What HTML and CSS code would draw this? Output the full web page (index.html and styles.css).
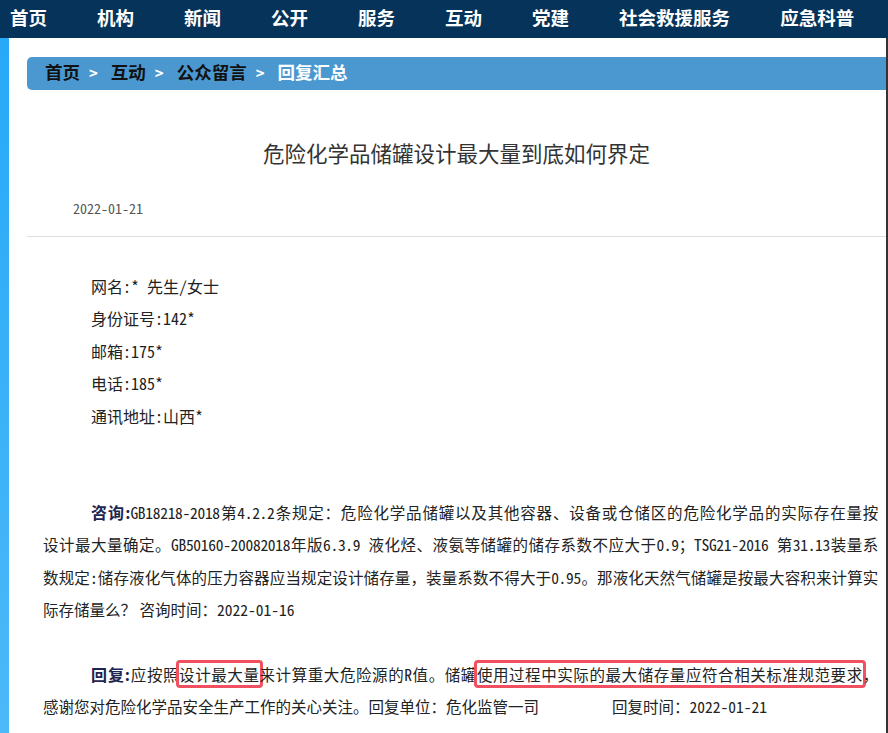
FILE: index.html
```html
<!DOCTYPE html>
<html lang="zh-CN">
<head>
    <meta charset="UTF-8" />
    <title>公众留言 - 回复汇总</title>
    <link rel="stylesheet" href="styles.css">
</head>
<body>

    <div class="topnav">
        <a href="#">首页</a>
        <a href="#">机构</a>
        <a href="#">新闻</a>
        <a href="#">公开</a>
        <a href="#">服务</a>
        <a href="#">互动</a>
        <a href="#">党建</a>
        <a href="#">社会救援服务</a>
        <a href="#">应急科普</a>
    </div>

    <div class="page">
        <div class="side"></div>

        <div class="main">
            <div class="crumb">
                <a href="#">首页</a><span class="sep">&gt;</span>
                <a href="#">互动</a><span class="sep">&gt;</span>
                <a href="#">公众留言</a><span class="sep">&gt;</span>
                <span class="current">回复汇总</span>
            </div>

            <h1 class="title">危险化学品储罐设计最大量到底如何界定</h1>
            <div class="date">2022-01-21</div>

            <div class="info">
                <p>网名:* 先生/女士</p>
                <p>身份证号:142*</p>
                <p>邮箱:175*</p>
                <p>电话:185*</p>
                <p>通讯地址:山西*</p>
            </div>

            <!-- latin runs get half-width glyphs, like the old 宋体 page -->
            <p class="ask"><b>咨询:</b><span class="en">GB18218-2018</span>第<span class="en">4.2.2</span>条规定：危险化学品储罐以及其他容器、设备或仓储区的危险化学品的实际存在量按<br>设计最大量确定。<span class="en">GB50160-20082018</span>年版<span class="en">6.3.9 </span>液化烃、液氨等储罐的储存系数不应大于<span class="en">0.9</span>；<span class="en">TSG21-2016 </span>第<span class="en">31.13</span>装量系<br>数规定<span class="en">:</span>储存液化气体的压力容器应当规定设计储存量，装量系数不得大于<span class="en">0.95</span>。那液化天然气储罐是按最大容积来计算实<span class="tail">际存储量么？ 咨询时间：<span class="en">2022-01-16</span></span></p>

            <p class="reply"><b>回复:</b>应按照<span class="mark">设计最大量</span>来计算重大危险源的<span class="en">R</span>值。储罐<span class="mark">使用过程中实际的最大储存量应符合相关标准规范要求</span>，<span class="tail">感谢您对危险化学品安全生产工作的关心关注。回复单位：危化监管一司<span class="time">回复时间：<span class="en">2022-01-21</span></span></span></p>
        </div>
    </div>

</body>
</html>
```

FILE: styles.css
```css
body {
    margin: 0;
    background: #fff;
    font-family: "Noto Sans CJK SC", sans-serif;
    color: #222;
}

.topnav {
    height: 38px;
    box-sizing: border-box;
    padding: 0 0 5px 10px;
    background-color: #06335a;
    display: flex;
    align-items: center;
    gap: 50px;
}

    .topnav a {
        color: #fff;
        font-size: 18.5px;
        font-weight: bold;
        text-decoration: none;
    }

.page {
    display: flex;
    border-right: 2px solid #333;
    min-height: 695px;
}

.side {
    width: 9px;
    flex-shrink: 0;
    background: linear-gradient(#27a9f7, #4cb9f8);
}

.main {
    flex: 1;
    padding: 19px 0 0 18px;
}

.crumb {
    height: 33px;
    line-height: 30px;
    background-color: #4b97cf;
    border-radius: 5px 0 0 5px;
    padding-left: 18px;
    font-size: 17.5px;
    font-weight: bold;
}

    .crumb a {
        color: #111;
        text-decoration: none;
    }

    .crumb .sep {
        color: #fff;
        margin: 0 9px;
        font-size: 15px;
    }

    .crumb .current {
        color: #fff;
    }

.title {
    margin: 48px 0 0;
    text-align: center;
    font-size: 21.5px;
    font-weight: normal;
    line-height: 30px;
    color: #333;
}

.date {
    margin-top: 30px;
    padding: 0 0 18px 46px;
    font-size: 14px;
    line-height: 20px;
    color: #555;
    font-feature-settings: "hwid" 1;
    border-bottom: 1px solid #ddd;
}

.info {
    margin: 33px 0 0 64px;
}

    .info p {
        margin: 0;
        font-size: 16px;
        line-height: 32.4px;
        font-feature-settings: "hwid" 1;
    }

.ask, .reply {
    margin: 0;
    padding: 0 8px 0 16px;
    font-size: 15.5px;
    line-height: 32.4px;
    letter-spacing: -0.3px;
    text-indent: 48px;
    text-align: justify;
    text-align-last: justify;
}

.ask {
    margin-top: 64px;
}

.reply {
    margin-top: 32.4px;
}

    .ask b, .reply b {
        color: #1d2550;
        font-size: 16px;
        letter-spacing: 0;
    }

.en {
    font-feature-settings: "hwid" 1;
}

.tail {
    display: block;
    text-indent: 0;
    text-align: left;
    text-align-last: left;
    letter-spacing: 0;
}

.time {
    margin-left: 73px;
}

.mark {
    border: 3px solid #f0505f;
    border-radius: 4px;
    margin: 0 -3px;
}
```
